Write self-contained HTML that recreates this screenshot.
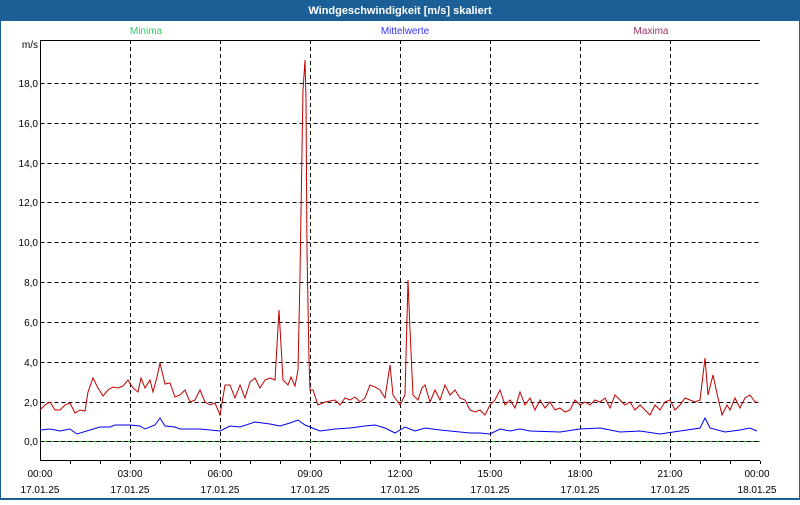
<!DOCTYPE html>
<html><head><meta charset="utf-8"><style>
body{margin:0;width:800px;height:500px;overflow:hidden;background:#fff;font-family:"Liberation Sans",sans-serif}
</style></head><body>
<svg width="800" height="500" xmlns="http://www.w3.org/2000/svg" font-family="Liberation Sans, sans-serif">
<rect x="0" y="0" width="800" height="500" fill="#1c5f96"/>
<rect x="1" y="21" width="798" height="477" fill="#fff"/>
<text x="400" y="14" fill="#fff" font-size="11" font-weight="bold" text-anchor="middle">Windgeschwindigkeit [m/s] skaliert</text>
<text x="146" y="34" fill="#33cc66" font-size="10" text-anchor="middle">Minima</text>
<text x="405" y="34" fill="#3333ff" font-size="10" text-anchor="middle">Mittelwerte</text>
<text x="651" y="34" fill="#993366" font-size="10" text-anchor="middle">Maxima</text>
<g stroke="#000" stroke-width="1" stroke-dasharray="4,3" fill="none">
<path d="M40.5 83.5H760M40.5 123.5H760M40.5 163.5H760M40.5 202.5H760M40.5 242.5H760M40.5 282.5H760M40.5 322.5H760M40.5 362.5H760M40.5 402.5H760"/>
<path d="M130.5 40V460M220.5 40V460M310.5 40V460M400.5 40V460M490.5 40V460M580.5 40V460M670.5 40V460"/>
</g>
<path d="M40 441.5H760" stroke="#22aa22" stroke-width="1"/>
<path d="M40 441.5H760" stroke="#000" stroke-width="1" stroke-dasharray="4,3"/>
<path d="M40.5 40V460.5H760M40 40.5H760" stroke="#000" fill="none"/>
<g stroke="#000"><path d="M70.5 461v3M100.5 461v3M130.5 461v3M160.5 461v3M190.5 461v3M220.5 461v3M250.5 461v3M280.5 461v3M310.5 461v3M340.5 461v3M370.5 461v3M400.5 461v3M430.5 461v3M460.5 461v3M490.5 461v3M520.5 461v3M550.5 461v3M580.5 461v3M610.5 461v3M640.5 461v3M670.5 461v3M700.5 461v3M730.5 461v3M760.5 461v3"/></g>
<g font-size="10" fill="#000" text-anchor="end">
<text x="38" y="48">m/s</text>
<text x="38" y="87">18,0</text><text x="38" y="127">16,0</text><text x="38" y="167">14,0</text><text x="38" y="206">12,0</text><text x="38" y="246">10,0</text><text x="38" y="286">8,0</text><text x="38" y="326">6,0</text><text x="38" y="366">4,0</text><text x="38" y="406">2,0</text><text x="38" y="445">0,0</text>
</g>
<g font-size="10" fill="#000" text-anchor="middle">
<text x="40" y="477">00:00</text><text x="130" y="477">03:00</text><text x="220" y="477">06:00</text><text x="310" y="477">09:00</text><text x="400" y="477">12:00</text><text x="490" y="477">15:00</text><text x="580" y="477">18:00</text><text x="670" y="477">21:00</text><text x="757" y="477">00:00</text>
<text x="40" y="493">17.01.25</text><text x="130" y="493">17.01.25</text><text x="220" y="493">17.01.25</text><text x="310" y="493">17.01.25</text><text x="400" y="493">17.01.25</text><text x="490" y="493">17.01.25</text><text x="580" y="493">17.01.25</text><text x="670" y="493">17.01.25</text><text x="757" y="493">18.01.25</text>
</g>
<polyline fill="none" stroke="#0000ee" stroke-width="1" points="40,430 50,429 60,431 70,429 77,434 90,430 100,427 110,427 115,425 130,425 140,426 145,429 155,425 160,418 165,426 175,427 180,429 200,429 220,431 230,426 240,427 255,422 270,424 280,426 290,423 298,420 305,425 310,427 320,431 335,429 350,428 365,426 375,425 385,428 395,433 405,427 415,431 425,428 440,430 460,432 470,433 480,433 490,434 500,429 510,431 520,429 530,431 560,432 580,429 600,428 620,432 640,431 660,434 680,431 700,428 705,418 710,428 725,432 740,430 750,428 757,431"/>
<polyline fill="none" stroke="#c00000" stroke-width="1" points="40,410 45,405 50,402 55,410 60,410 65,405 70,403 75,413 80,410 85,411 88,392 93,378 98,388 103,396 108,390 113,387 118,388 123,386 128,380 133,388 138,392 141,378 145,388 150,380 153,392 157,377 160,363 165,384 170,383 175,397 180,395 185,390 190,402 195,400 200,390 205,402 210,405 215,403 220,415 225,385 230,385 235,398 240,385 245,398 250,382 255,378 260,388 265,380 270,378 275,380 279,310 283,380 288,385 291,377 295,386 298,370 300,275 302,150 303,90 305,60 306,100 307,250 309,360 310,390 313,390 318,405 325,402 335,400 340,405 345,398 350,400 355,397 360,402 365,398 370,385 375,387 380,390 385,398 390,365 393,395 400,405 405,395 408,280 410,330 413,395 418,400 422,388 425,385 430,402 435,390 440,400 445,385 450,395 455,390 460,398 465,400 470,410 475,412 480,410 485,415 490,405 495,400 500,390 505,405 510,400 515,408 520,392 525,405 530,398 535,410 540,400 545,408 550,402 555,410 560,408 565,412 570,410 575,400 580,405 585,402 590,405 595,400 600,402 605,398 610,408 615,395 620,400 625,405 630,402 635,410 640,405 645,410 650,415 655,405 660,410 665,402 670,400 675,410 680,405 685,398 690,400 695,402 700,400 705,358 708,395 713,375 718,398 722,415 727,405 730,410 735,398 740,408 745,398 750,395 755,402 757,402"/>
</svg>
</body></html>
